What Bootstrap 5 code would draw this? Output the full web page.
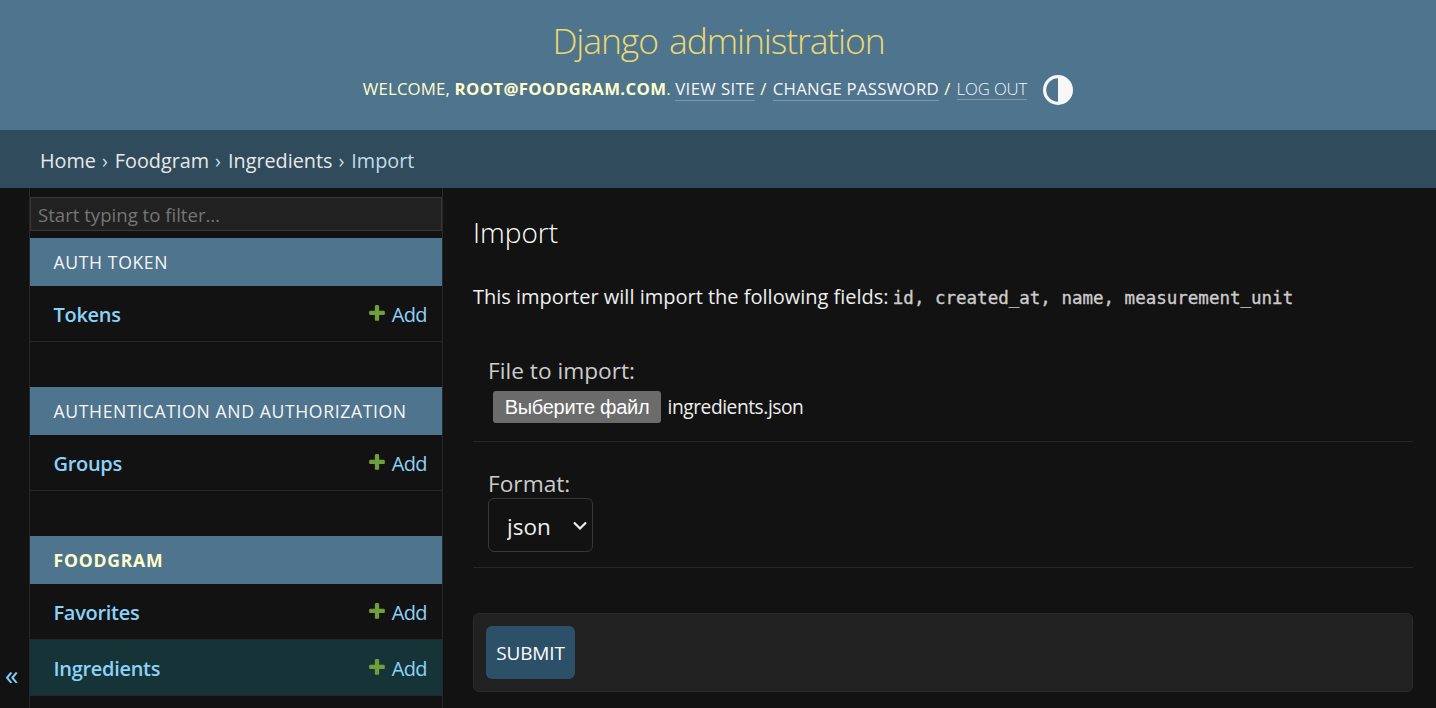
<!DOCTYPE html>
<html lang="en" data-bs-theme="dark">
<head>
<meta charset="utf-8">
<meta name="viewport" content="width=device-width, initial-scale=1">
<title>Import | Django administration</title>
<link href="https://cdn.jsdelivr.net/npm/bootstrap@5.3.0/dist/css/bootstrap.min.css" rel="stylesheet">
<style>
  :root { --hairline: #272727; --primary: #4f748e; --link: #8cd2f8; }
  body { font-family: "Open Sans", "Noto Sans", sans-serif; background: #121212; color: #eee; height: 708px; overflow: hidden; }
  a { text-decoration: none; color: var(--link); }
  .site-header { background: var(--primary); height: 130px; color: #ffc; }
  .site-title { font-size: 35.5px; font-weight: 300; line-height: 48px; margin: 16px 0 1px 1px; color: #ecd970; letter-spacing: -1.1px; word-spacing: 3px; }
  .user-tools { font-size: 16.8px; line-height: 24px; margin-top: 9px; padding-bottom: 1px; height: 31px; white-space: pre; }
  .user-tools a { color: #f7f7f7; border-bottom: 1px solid #8199ac; line-height: 22px; }
  .user-tools .logout { font-weight: 300; letter-spacing: -.15px; line-height: 21px; }
  .user-tools .welcome { letter-spacing: .15px; }
  .user-tools strong { letter-spacing: .33px; }
  .user-tools .view { letter-spacing: .4px; }
  .user-tools .change { letter-spacing: .27px; }
  .user-tools .sep { letter-spacing: .9px; }
  .theme-toggle { margin: 2px 0 0 16px; }
  .crumbs { background: #304b5c; height: 58px; padding: 3px 0 0 40px; font-size: 19.8px; color: #c4dce8; white-space: pre; }
  .crumbs a { color: #e8e8e8; }
  .crumbs .sep { letter-spacing: .9px; }
  .toggle-nav { width: 29px; padding: 472px 0 0 5px; font-size: 27px; line-height: 30px; color: var(--link); }
  .side-nav { width: 414px; height: 520px; border: solid var(--hairline); border-width: 0 1px; overflow: hidden; }
  .nav-filter { margin: 9px 0 7px; height: 34px; width: 412px; border: 1px solid #373737; border-radius: 0; background: #212121 !important; padding: 1px 7px 0; font-size: 18.6px; }
  .nav-filter::placeholder { color: #757575; opacity: 1; }
  .app-block { margin-bottom: 45px; }
  .app-caption { height: 48px; background: var(--primary); padding: 1px 0 0 23.5px; font-size: 17.6px; letter-spacing: .63px; color: #f7f7f7; white-space: nowrap; }
  .app-caption.active { color: #ffc; font-weight: 700; letter-spacing: .75px; }
  .model-row { height: 56px; border-bottom: 1px solid var(--hairline); padding: 3px 15px 0 23.5px; font-size: 20px; }
  .model-row .model-name { font-weight: 600; letter-spacing: -.3px; }
  .model-row .add-link { letter-spacing: -.6px; }
  .model-row.current { background: #163337; }
  .model-row svg { margin: -5px 5px 0 0; }
  .content-area { padding: 22px 23px 0 30px; }
  .page-title { font-size: 28px; font-weight: 300; line-height: 44px; margin: 0; }
  .intro { font-size: 20px; line-height: 32px; margin: 27px 0 0; white-space: pre; }
  .intro code { font: 17.5px "DejaVu Sans Mono", monospace; color: #ccc; margin-left: -1px; -webkit-text-stroke: .35px #ccc; }
  .field { border-bottom: 1px solid var(--hairline); padding: 0 15px; }
  .field-label { font-size: 22.7px; line-height: 32px; color: #ccc; display: block; }
  .file-field { margin-top: 42px; height: 87px; }
  .file-field .field-label { height: 36px; }
  .format-field { padding-top: 26px; height: 126px; }
  .format-field .field-label { height: 30px; }
  .file-button { background: #6b6b6b; color: #fff; border-radius: 3px; width: 168px; height: 32px; font: 20px/32px "Liberation Sans", sans-serif; letter-spacing: -.3px; text-align: center; margin-left: 5px; }
  .file-name { font-size: 19.2px; letter-spacing: -.45px; line-height: 32px; margin-left: 6.5px; color: #eee; }
  .format-select { width: 105px; height: 54px; border: 1px solid #373737; border-radius: 6px; background-color: #121212; color: #eee; font-size: 22.5px; padding: 3px 30px 0 18px; background-size: 14px 10px; background-position: 84px 22px;
    background-image: url("data:image/svg+xml,%3csvg xmlns='http://www.w3.org/2000/svg' viewBox='0 0 14 10'%3e%3cpath fill='none' stroke='%23eee' stroke-width='2.2' d='M1 1.5l6 6 6-6'/%3e%3c/svg%3e") !important; }
  .submit-row { margin-top: 45px; height: 79px; background: #212121; border: 1px solid #2b2b2b; border-radius: 6px; padding: 12px; }
  .submit-btn { width: 89px; height: 53px; background: #2c5067; color: #fff; border: 0; border-radius: 6px; font-size: 19px; letter-spacing: -.15px; padding: 2px 0 0; }
</style>
</head>
<body>
<header class="site-header d-flex flex-column align-items-center">
  <h1 class="site-title">Django administration</h1>
  <div class="user-tools d-flex align-items-center"><span class="welcome">WELCOME, </span><strong>ROOT@FOODGRAM.COM</strong><span>. </span><a href="#" class="view">VIEW SITE</a><span class="sep"> / </span><a href="#" class="change">CHANGE PASSWORD</a><span class="sep"> / </span><a href="#" class="logout">LOG OUT</a><svg class="theme-toggle" width="30" height="30" viewBox="0 0 30 30"><circle cx="15" cy="15" r="13.4" fill="none" stroke="#f7f7f7" stroke-width="3.2"/><path d="M15 1a14 14 0 0 1 0 28z" fill="#f7f7f7"/></svg></div>
</header>
<nav class="crumbs d-flex align-items-center" aria-label="Breadcrumbs"><a href="#">Home</a><span class="sep"> › </span><a href="#">Foodgram</a><span class="sep"> › </span><a href="#">Ingredients</a><span class="sep"> › </span><span>Import</span></nav>
<div class="d-flex">
  <div class="toggle-nav flex-shrink-0">«</div>
  <aside class="side-nav flex-shrink-0">
    <input class="form-control nav-filter" type="search" placeholder="Start typing to filter…">
    <section class="app-block">
      <div class="app-caption d-flex align-items-center">AUTH TOKEN</div>
      <div class="model-row d-flex align-items-center justify-content-between"><a href="#" class="model-name">Tokens</a><a href="#" class="add-link d-flex align-items-center"><svg width="20" height="20" viewBox="0 0 1792 1792"><use href="#plus"/></svg>Add</a></div>
    </section>
    <section class="app-block">
      <div class="app-caption d-flex align-items-center">AUTHENTICATION AND AUTHORIZATION</div>
      <div class="model-row d-flex align-items-center justify-content-between"><a href="#" class="model-name">Groups</a><a href="#" class="add-link d-flex align-items-center"><svg width="20" height="20" viewBox="0 0 1792 1792"><use href="#plus"/></svg>Add</a></div>
    </section>
    <section class="app-block">
      <div class="app-caption active d-flex align-items-center">FOODGRAM</div>
      <div class="model-row d-flex align-items-center justify-content-between"><a href="#" class="model-name">Favorites</a><a href="#" class="add-link d-flex align-items-center"><svg width="20" height="20" viewBox="0 0 1792 1792"><use href="#plus"/></svg>Add</a></div>
      <div class="model-row current d-flex align-items-center justify-content-between"><a href="#" class="model-name">Ingredients</a><a href="#" class="add-link d-flex align-items-center"><svg width="20" height="20" viewBox="0 0 1792 1792"><use href="#plus"/></svg>Add</a></div>
    </section>
  </aside>
  <main class="content-area flex-grow-1">
    <h2 class="page-title">Import</h2>
    <p class="intro"><span>This importer will import the following fields: </span><code>id, created_at, name, measurement_unit</code></p>
    <form>
      <div class="field file-field">
        <span class="field-label">File to import:</span>
        <div class="d-flex"><span class="file-button">Выберите файл</span><span class="file-name">ingredients.json</span></div>
      </div>
      <div class="field format-field">
        <label class="field-label" for="format">Format:</label>
        <select class="form-select format-select" id="format"><option>json</option></select>
      </div>
      <div class="submit-row"><button type="button" class="btn submit-btn">SUBMIT</button></div>
    </form>
  </main>
</div>
<svg class="d-none"><defs><path id="plus" fill="#6f9f3c" d="M1600 796v192q0 40-28 68t-68 28h-416v416q0 40-28 68t-68 28h-192q-40 0-68-28t-28-68v-416h-416q-40 0-68-28t-28-68v-192q0-40 28-68t68-28h416v-416q0-40 28-68t68-28h192q40 0 68 28t28 68v416h416q40 0 68 28t28 68z"/></defs></svg>
<script src="https://cdn.jsdelivr.net/npm/bootstrap@5.3.0/dist/js/bootstrap.bundle.min.js"></script>
</body>
</html>
